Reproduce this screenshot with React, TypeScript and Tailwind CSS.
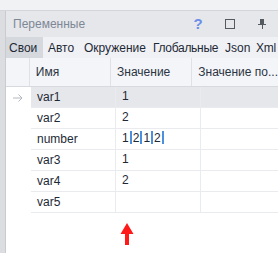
const tabs = [
  { label: "Свои", w: "w-[37px] pl-[3px]", active: true },
  { label: "Авто", w: "w-[36px] pl-[5px]" },
  { label: "Окружение", w: "w-[69px] pl-[5px]" },
  { label: "Глобальные", w: "w-[72px] pl-[5px] tracking-[-0.3px]" },
  { label: "Json", w: "w-[32px] pl-[5px]" },
  { label: "Xml", w: "w-[26px] pl-[4px] tracking-[-0.3px]" },
];

const rows: { name: string; value: string; selected?: boolean }[] = [
  { name: "var1", value: "1", selected: true },
  { name: "var2", value: "2" },
  { name: "number", value: "1|2|1|2|" },
  { name: "var3", value: "1" },
  { name: "var4", value: "2" },
  { name: "var5", value: "" },
];

function Value({ text }: { text: string }) {
  // разделители | рисуются синими полосками
  return (
    <span className="flex items-center">
      {text.split("").map((ch, i) =>
        ch === "|" ? (
          <span key={i} className="inline-block w-[2px] h-[13px] bg-[#4d8fdc] mx-[1px]" />
        ) : (
          <span key={i}>{ch}</span>
        )
      )}
    </span>
  );
}

export default function App() {
  return (
    <div
      className="w-[278px] h-[253px] bg-white flex flex-col overflow-hidden text-[12px] text-[#1e2936]"
      style={{ fontFamily: '"Liberation Sans", Arial, sans-serif' }}
    >
      {/* верхняя полоса */}
      <div className="h-[11px] bg-[#f1f2f4] border-b border-[#d3d5da] shrink-0" />

      <div className="flex flex-1 min-h-0">
        {/* левая полоса соседней панели */}
        <div className="w-[6px] bg-[#dcdde1] border-r border-[#c9cbd1] shrink-0" />

        <div className="flex-1 flex flex-col min-w-0">
          {/* заголовок */}
          <div className="h-[26px] bg-[#e6e7eb] flex items-center pl-[7px] shrink-0">
            <span className="text-[#7d8796] flex-1">Переменные</span>
            <span className="w-[32px] text-center text-[#6b8fe8] text-[15px] font-semibold">?</span>
            <span className="w-[32px] flex justify-center">
              <span className="w-[10px] h-[10px] border border-[#555a61]" />
            </span>
            <span className="w-[32px] flex justify-center">
              <svg width="10" height="12" viewBox="0 0 10 12">
                <path d="M3 1h4v5h2v1H6v4H5V7H1V6h2z" fill="#555a61" />
              </svg>
            </span>
          </div>

          {/* вкладки */}
          <div className="h-[21px] bg-[#f0f1f5] flex shrink-0 whitespace-nowrap">
            {tabs.map((t) => (
              <div
                key={t.label}
                className={`${t.w} shrink-0 flex items-center ${t.active ? "bg-[#d5d8dd]" : ""}`}
              >
                {t.label}
              </div>
            ))}
          </div>

          {/* таблица */}
          <div className="flex flex-col">
            <div className="h-[29px] bg-[#f4f5f8] border-b border-[#d7d9de] flex text-[#2a3442]">
              <div className="w-[25px] border-r border-[#dfe1e5]" />
              <div className="w-[85px] border-r border-[#dfe1e5] pl-[6px] flex items-center">Имя</div>
              <div className="w-[85px] border-r border-[#dfe1e5] pl-[6px] flex items-center">Значение</div>
              <div className="flex-1 pl-[6px] flex items-center whitespace-nowrap">Значение по...</div>
            </div>
            {rows.map((r) => (
              <div key={r.name} className="h-[21px] flex">
                <div className="w-[25px] flex items-center pl-[7px]">
                  {r.selected && (
                    <svg width="10" height="8" viewBox="0 0 10 8">
                      <path d="M0 4H9M5.5 0.5L9 4L5.5 7.5" stroke="#b3b8c0" strokeWidth="1" fill="none" />
                    </svg>
                  )}
                </div>
                <div className={`flex flex-1 border-b border-[#eaebee] ${r.selected ? "bg-[#e6e7ea]" : ""}`}>
                  <div className="w-[85px] border-r border-[#eaebee] pl-[6px] flex items-center">{r.name}</div>
                  <div className="w-[85px] border-r border-[#eaebee] pl-[6px] flex items-center pb-[3px]">
                    <Value text={r.value} />
                  </div>
                  <div className="flex-1" />
                </div>
              </div>
            ))}
          </div>

          {/* красная стрелка */}
          <div className="flex-1 relative">
            <svg className="absolute left-[114px] top-[10px]" width="14" height="22" viewBox="0 0 14 22">
              <path d="M7 0L13.5 11H9V22H5V11H0.5Z" fill="#ff1a1a" />
            </svg>
          </div>
        </div>
      </div>
    </div>
  );
}
